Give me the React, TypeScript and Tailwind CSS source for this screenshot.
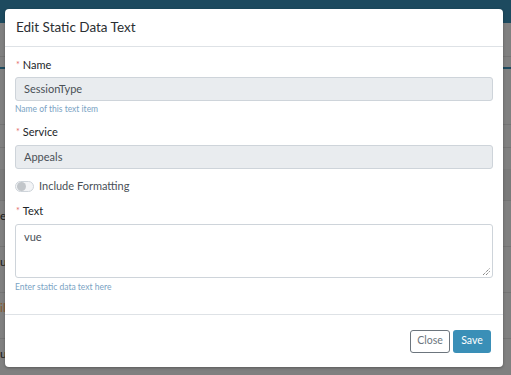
export default function App() {
  const font = { fontFamily: 'Lato, "Noto Sans", sans-serif' };
  return (
    <div className="relative w-[511px] h-[375px] overflow-hidden bg-[#808080]" style={font}>
      {/* page behind the overlay */}
      <div className="flex flex-col">
        <div className="h-[23px] bg-[#1d4a5f]" />
        <div className="h-[34px] border-b border-[#747474]" />
        <div className="h-[12px] border-b-2 border-[#1d4a5f]" />
        <div className="h-[56px] border-b border-[#747474]" />
        <div className="h-[23px] border-b border-[#747474]" />
        <div className="h-[21px]" />
        <div className="h-[32px] bg-[#7a7a7a] border-b border-[#747474]" />
        <Row text="e" color="text-[#1a1a1a]" />
        <Row text="u" color="text-[#1a1a1a]" />
        <Row text="il" color="text-[#8a5a2a]" />
        <Row text="u" color="text-[#1a1a1a]" />
      </div>

      {/* modal */}
      <div className="absolute left-[5px] top-[9px] w-[498px] h-[358px] rounded-[4px] bg-white shadow-[0_1px_3px_rgba(0,0,0,0.3)] flex flex-col">
        <div className="h-[38px] shrink-0 border-b border-[#dee2e6] flex items-center px-[11px]">
          <h5 className="text-[13.5px] text-[#2b2f33]">Edit Static Data Text</h5>
        </div>

        <div className="flex-1 px-[10px] pt-[11px]">
          <Label text="Name" />
          <div className="mt-[5px] h-[24px] rounded-[3px] border border-[#ced4da] bg-[#e9ecef] flex items-center px-[8px] text-[11px] text-[#495057]">
            SessionType
          </div>
          <p className="mt-[2px] text-[8.5px] leading-[12px] text-[#7aa3c4]">Name of this text item</p>

          <div className="mt-[10px]">
            <Label text="Service" />
          </div>
          <div className="mt-[6px] h-[24px] rounded-[3px] border border-[#ced4da] bg-[#e9ecef] flex items-center px-[8px] text-[11px] text-[#495057]">
            Appeals
          </div>

          <div className="mt-[11px] flex items-center gap-[5px] h-[12px]">
            <div className="w-[19px] h-[11px] rounded-full border border-[#ced4da] bg-[#f3f4f6] flex items-center px-[1px]">
              <div className="w-[9px] h-[9px] rounded-full bg-[#c2c6ca]" />
            </div>
            <span className="text-[11px] text-[#495057]">Include Formatting</span>
          </div>

          <div className="mt-[12px]">
            <Label text="Text" />
          </div>
          <div className="relative mt-[6px] h-[54px] rounded-[3px] border border-[#ced4da] bg-white px-[8px] pt-[4px] text-[11px] text-[#495057]">
            vue
            <svg className="absolute right-[1px] bottom-[1px]" width="9" height="9" viewBox="0 0 9 9">
              <path d="M1 8 L8 1 M4 8 L8 4" stroke="#555" strokeWidth="1" strokeDasharray="1 1" />
            </svg>
          </div>
          <p className="mt-[3px] text-[8.5px] leading-[12px] text-[#7aa3c4]">Enter static data text here</p>
        </div>

        <div className="h-[53px] shrink-0 border-t border-[#dee2e6] flex items-center justify-end gap-[3px] pr-[12px]">
          <button className="w-[40px] h-[23px] rounded-[3px] border border-[#6c757d] text-[10.5px] text-[#6c757d] bg-white">Close</button>
          <button className="w-[38px] h-[23px] rounded-[3px] bg-[#3a8fb7] text-[10.5px] text-white">Save</button>
        </div>
      </div>
    </div>
  );
}

function Row({ text, color }: { text: string; color: string }) {
  return (
    <div className={`h-[46px] shrink-0 border-b border-[#747474] pt-[8px] text-[12px] leading-[14px] ${color}`}>
      {text}
    </div>
  );
}

function Label({ text }: { text: string }) {
  return (
    <div className="flex items-center h-[14px] pl-[1px] text-[11px] text-[#212529]">
      <span className="text-[#e36b6b] text-[9px] mr-[3px]">*</span>
      {text}
    </div>
  );
}
